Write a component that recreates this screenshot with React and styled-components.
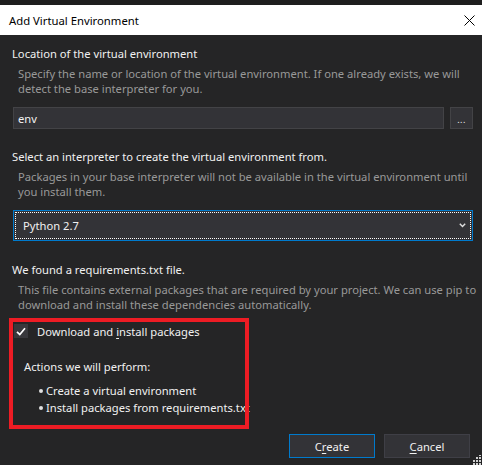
import React from "react";
import styled, { createGlobalStyle } from "styled-components";

const Global = createGlobalStyle`
  html, body { margin: 0; padding: 0; background: #1e1e1e; }
  body { font-family: "Segoe UI", "Noto Sans", "Open Sans", sans-serif; }
  * { box-sizing: border-box; }
`;

const FONT = `"Segoe UI", "Noto Sans", "Open Sans", sans-serif`;

const Window = styled.div`
  position: relative;
  width: 482px;
  height: 465px;
  padding-top: 5px;
  background: #1e1e1e;
  display: flex;
  flex-direction: column;
  overflow: hidden;
  font-family: ${FONT};
  font-size: 11.2px;
`;

const TitleBar = styled.div`
  height: 30px;
  background: #ffffff;
  display: flex;
  align-items: center;
  justify-content: space-between;
  padding: 0 7px 0 9px;
`;

const Title = styled.span`
  color: #000;
  font-size: 11.3px;
`;

const Body = styled.div`
  flex: 1;
  background: #252526;
  padding: 11px 9px 0 12px;
  display: flex;
  flex-direction: column;
`;

const Heading = styled.div`
  color: #f1f1f1;
  line-height: 16px;
  white-space: nowrap;
  margin-top: ${(p) => p.$mt || 0}px;
`;

const Desc = styled.div`
  color: #999999;
  line-height: 15px;
  padding-left: 6px;
  margin-top: 4px;
  white-space: nowrap;
`;

const InputRow = styled.div`
  display: flex;
  gap: 6px;
  margin-top: 11px;
  padding-left: 1px;
`;

const TextInput = styled.div`
  flex: 1;
  height: 22px;
  background: #333337;
  border: 1px solid #434346;
  color: #f1f1f1;
  display: flex;
  align-items: center;
  padding-left: 4px;
`;

const BrowseButton = styled.div`
  width: 23px;
  height: 22px;
  background: #333337;
  border: 1px solid #434346;
  color: #f1f1f1;
  display: flex;
  align-items: center;
  justify-content: center;
  font-size: 9px;
  letter-spacing: 0.5px;
  padding-top: 2px;
`;

const Select = styled.div`
  margin-top: 11px;
  margin-left: 1px;
  height: 31px;
  background: #333337;
  border: 1px solid #007acc;
  padding: 1px;
`;

const SelectInner = styled.div`
  height: 100%;
  border: 1px dotted #ffffff;
  display: flex;
  align-items: center;
  justify-content: space-between;
  padding: 0 4px 0 7px;
  color: #f1f1f1;
`;

const Highlight = styled.div`
  position: relative;
  margin-top: 6px;
  margin-left: -3px;
  width: 240px;
  height: 111px;
  padding: 6px 0 0 5px;
  &::after {
    content: "";
    position: absolute;
    inset: 0;
    border: 4px solid #ed1c24;
    pointer-events: none;
  }
`;

const CheckRow = styled.div`
  display: flex;
  align-items: center;
  gap: 9px;
  color: #f1f1f1;
  height: 14px;
`;

const CheckBox = styled.div`
  width: 14px;
  height: 14px;
  background: #38383c;
  display: flex;
  align-items: center;
  justify-content: center;
`;

const Actions = styled.div`
  margin-top: 21px;
  padding-left: 10px;
  color: #f1f1f1;
`;

const ActionsTitle = styled.div`
  line-height: 16px;
`;

const BulletList = styled.ul`
  list-style: none;
  margin: 7px 0 0 0;
  padding: 0 0 0 15px;
  white-space: nowrap;
`;

const Bullet = styled.li`
  line-height: 17px;
  display: flex;
  align-items: center;
  &::before {
    content: "";
    flex-shrink: 0;
    width: 4px;
    height: 4px;
    border-radius: 50%;
    background: #e0e0e0;
    margin-right: 3px;
  }
`;

const ButtonRow = styled.div`
  margin-top: 5px;
  margin-right: 3px;
  display: flex;
  justify-content: flex-end;
  gap: 9px;
`;

const Button = styled.div`
  width: 86px;
  height: 24px;
  background: #333337;
  border: 1px solid ${(p) => (p.$primary ? "#007acc" : "#3f3f46")};
  color: #f1f1f1;
  display: flex;
  align-items: center;
  justify-content: center;
`;

const Key = styled.span`
  text-decoration: underline;
  text-underline-offset: 2px;
`;

const Grip = styled.svg`
  position: absolute;
  right: 0;
  bottom: 0;
`;

export default function App() {
  return (
    <>
      <Global />
      <Window>
        <TitleBar>
          <Title>Add Virtual Environment</Title>
          <svg width="11" height="11" viewBox="0 0 11 11">
            <path d="M0.5 0.5 L10.5 10.5 M10.5 0.5 L0.5 10.5" stroke="#000" strokeWidth="1" />
          </svg>
        </TitleBar>
        <Body>
          <Heading>Location of the virtual environment</Heading>
          <Desc>
            Specify the name or location of the virtual environment. If one already exists, we will
            <br />
            detect the base interpreter for you.
          </Desc>
          <InputRow>
            <TextInput>env</TextInput>
            <BrowseButton>...</BrowseButton>
          </InputRow>

          <Heading $mt={20}>Select an interpreter to create the virtual environment from.</Heading>
          <Desc>
            Packages in your base interpreter will not be available in the virtual environment until
            <br />
            you install them.
          </Desc>
          <Select>
            <SelectInner>
              <span>Python 2.7</span>
              <svg width="7" height="5" viewBox="0 0 7 5">
                <path d="M0.8 0.8 L3.5 3.6 L6.2 0.8" stroke="#e0e0e0" strokeWidth="1.4" fill="none" />
              </svg>
            </SelectInner>
          </Select>

          <Heading $mt={21}>We found a requirements.txt file.</Heading>
          <Desc>
            This file contains external packages that are required by your project. We can use pip to
            <br />
            download and install these dependencies automatically.
          </Desc>

          <Highlight>
            <CheckRow>
              <CheckBox>
                <svg width="10" height="9" viewBox="0 0 10 9">
                  <path d="M1 4.8 L3.8 7.6 L9 1.2" stroke="#ffffff" strokeWidth="1.7" fill="none" />
                </svg>
              </CheckBox>
              <span>
                Download and <Key>i</Key>nstall packages
              </span>
            </CheckRow>
            <Actions>
              <ActionsTitle>Actions we will perform:</ActionsTitle>
              <BulletList>
                <Bullet>Create a virtual environment</Bullet>
                <Bullet>Install packages from requirements.txt</Bullet>
              </BulletList>
            </Actions>
          </Highlight>

          <ButtonRow>
            <Button $primary>
              <span>
                C<Key>r</Key>eate
              </span>
            </Button>
            <Button>
              <span>
                <Key>C</Key>ancel
              </span>
            </Button>
          </ButtonRow>
        </Body>
        <Grip width="10" height="10" viewBox="0 0 10 10">
          {[
            [8, 0], [8, 3], [5, 3], [8, 6], [5, 6], [2, 6], [8, 9], [5, 9], [2, 9],
          ].map(([x, y], i) => (
            <rect key={i} x={x - 1} y={y - 1} width="2" height="2" fill="#d0d0d0" />
          ))}
        </Grip>
      </Window>
    </>
  );
}
